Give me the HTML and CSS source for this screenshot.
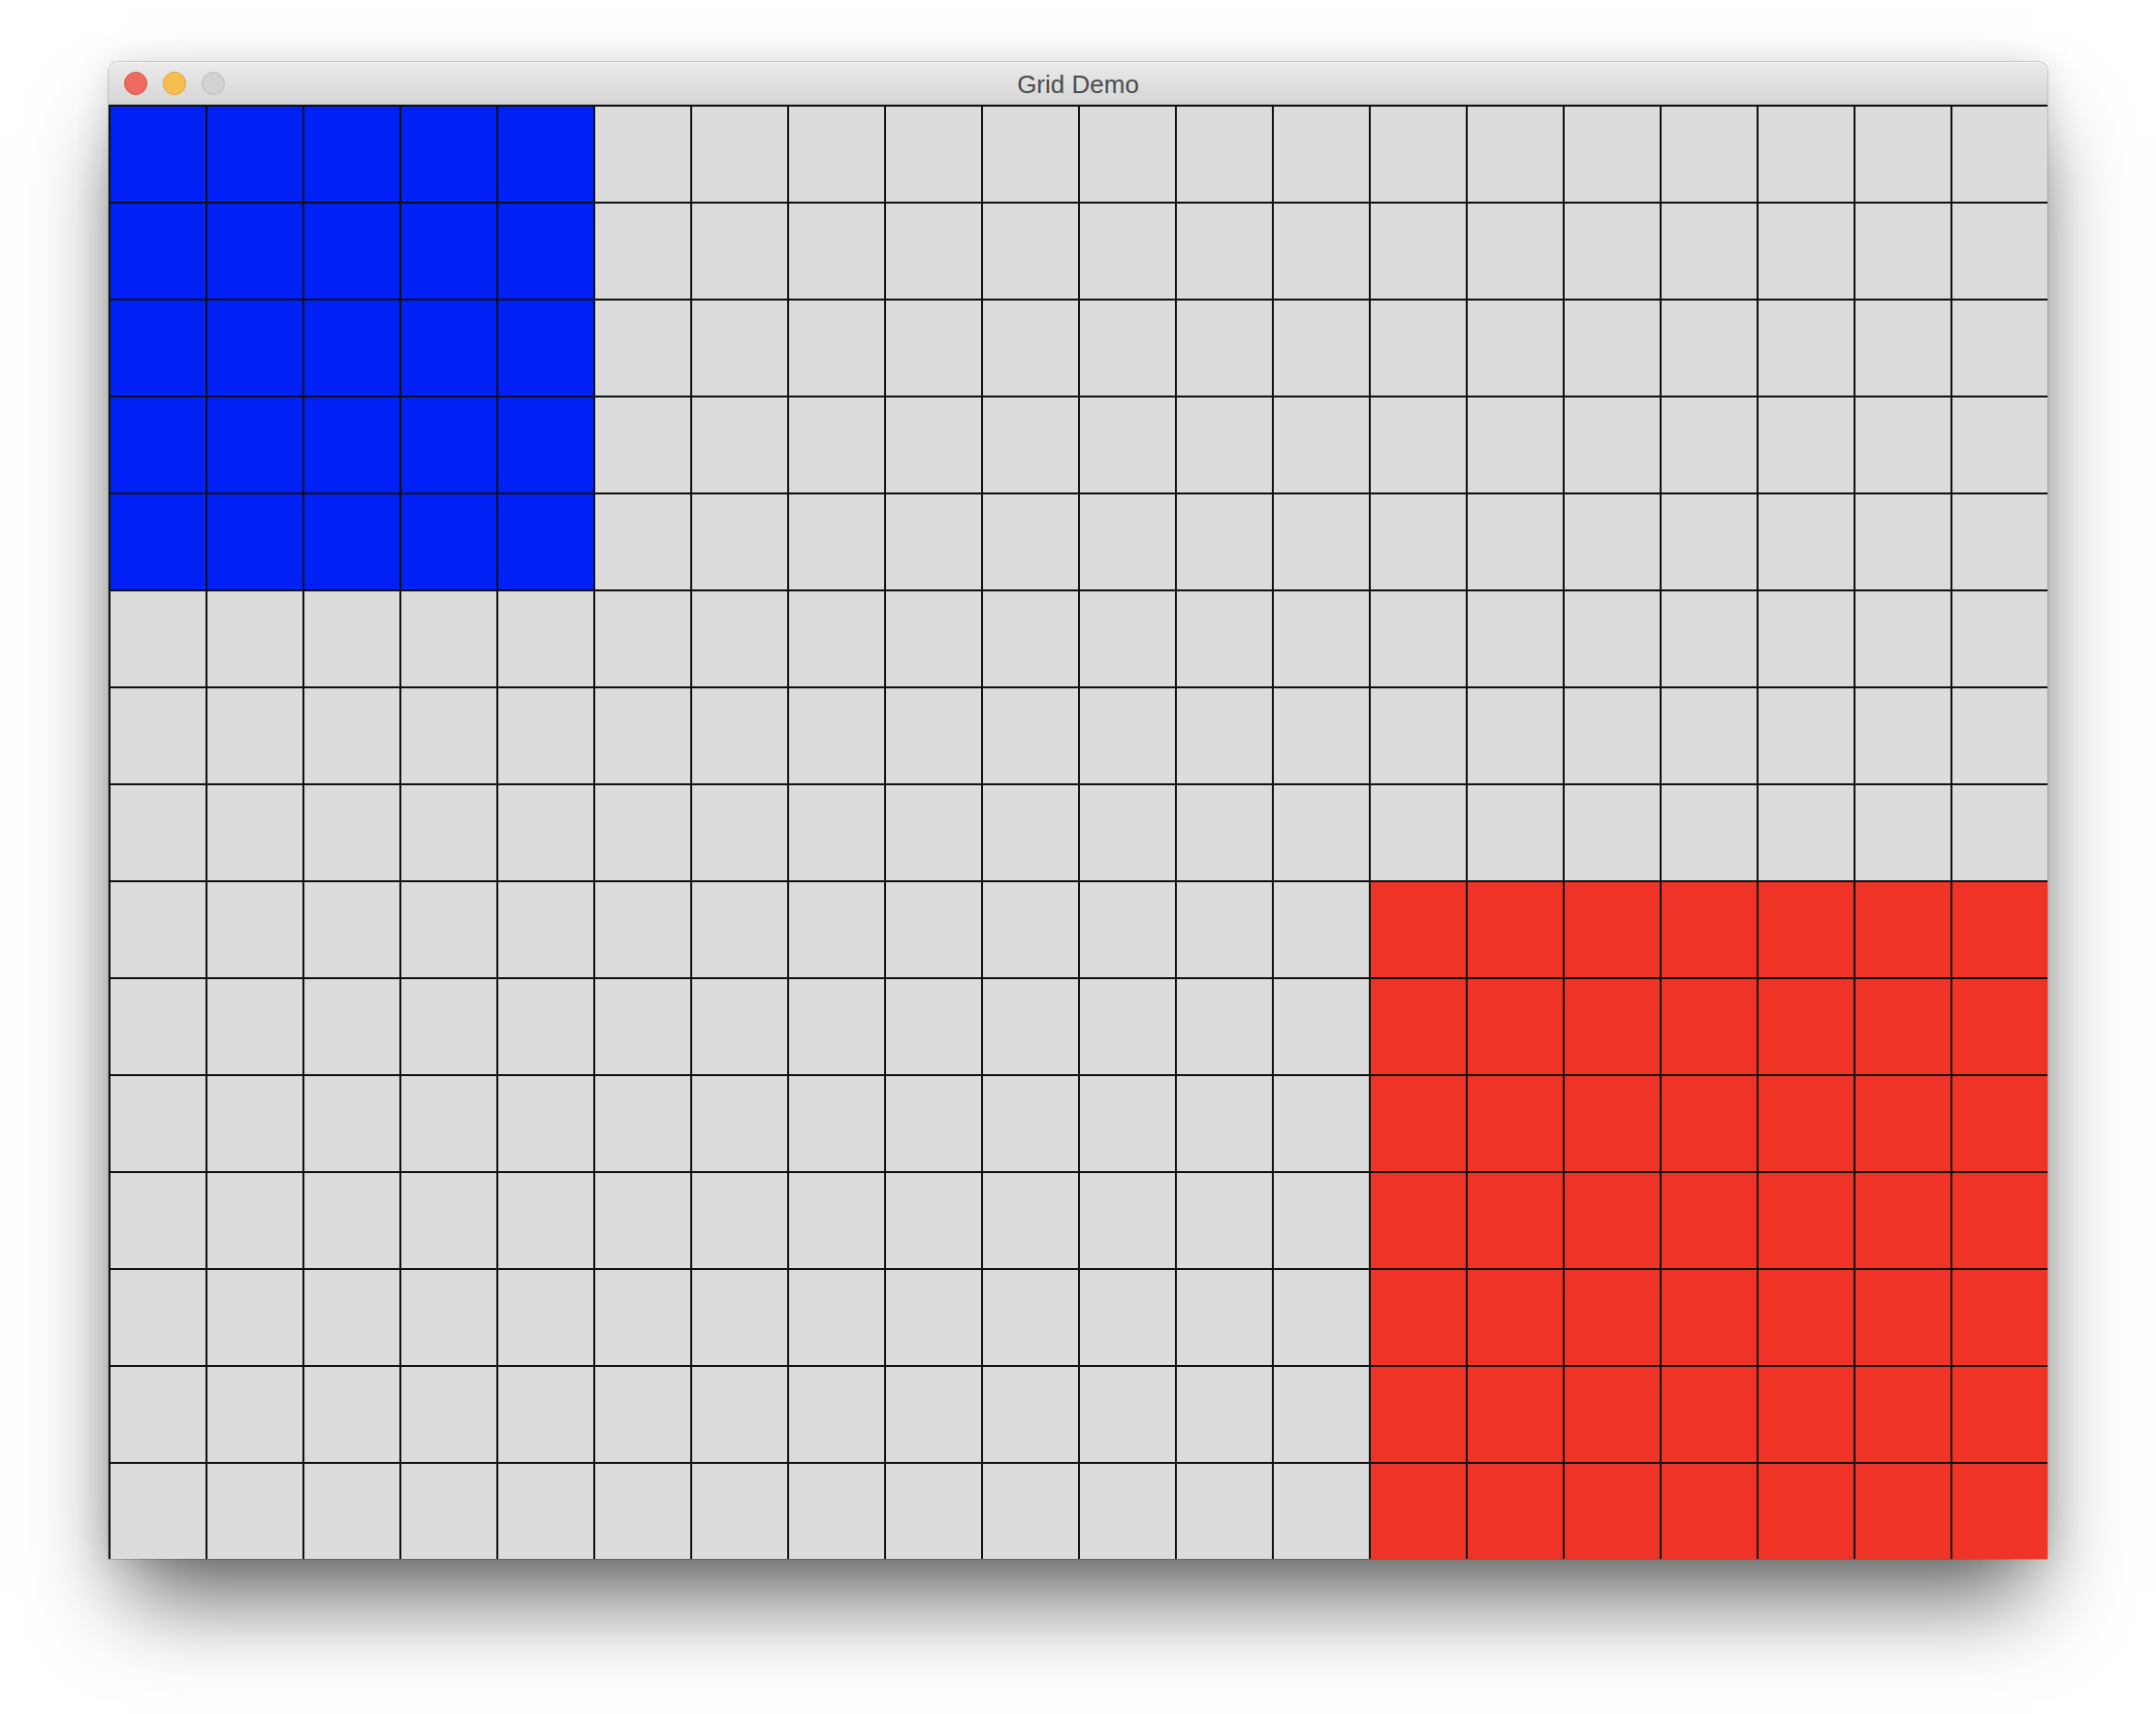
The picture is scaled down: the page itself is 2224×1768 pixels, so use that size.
FILE: index.html
```html
<!DOCTYPE html>
<html>
<head>
<meta charset="utf-8">
<title>Grid Demo</title>
<link rel="stylesheet" href="styles.css">
</head>
<body>
<div class="window">
  <div class="titlebar">
    <div class="lights">
      <span class="light close"></span>
      <span class="light min"></span>
      <span class="light zoom"></span>
    </div>
    <div class="title">Grid Demo</div>
  </div>
  <div class="grid">
    <div class="c b"></div><div class="c b"></div><div class="c b"></div><div class="c b"></div><div class="c b"></div><div class="c"></div><div class="c"></div><div class="c"></div><div class="c"></div><div class="c"></div><div class="c"></div><div class="c"></div><div class="c"></div><div class="c"></div><div class="c"></div><div class="c"></div><div class="c"></div><div class="c"></div><div class="c"></div><div class="c"></div>
    <div class="c b"></div><div class="c b"></div><div class="c b"></div><div class="c b"></div><div class="c b"></div><div class="c"></div><div class="c"></div><div class="c"></div><div class="c"></div><div class="c"></div><div class="c"></div><div class="c"></div><div class="c"></div><div class="c"></div><div class="c"></div><div class="c"></div><div class="c"></div><div class="c"></div><div class="c"></div><div class="c"></div>
    <div class="c b"></div><div class="c b"></div><div class="c b"></div><div class="c b"></div><div class="c b"></div><div class="c"></div><div class="c"></div><div class="c"></div><div class="c"></div><div class="c"></div><div class="c"></div><div class="c"></div><div class="c"></div><div class="c"></div><div class="c"></div><div class="c"></div><div class="c"></div><div class="c"></div><div class="c"></div><div class="c"></div>
    <div class="c b"></div><div class="c b"></div><div class="c b"></div><div class="c b"></div><div class="c b"></div><div class="c"></div><div class="c"></div><div class="c"></div><div class="c"></div><div class="c"></div><div class="c"></div><div class="c"></div><div class="c"></div><div class="c"></div><div class="c"></div><div class="c"></div><div class="c"></div><div class="c"></div><div class="c"></div><div class="c"></div>
    <div class="c b"></div><div class="c b"></div><div class="c b"></div><div class="c b"></div><div class="c b"></div><div class="c"></div><div class="c"></div><div class="c"></div><div class="c"></div><div class="c"></div><div class="c"></div><div class="c"></div><div class="c"></div><div class="c"></div><div class="c"></div><div class="c"></div><div class="c"></div><div class="c"></div><div class="c"></div><div class="c"></div>
    <div class="c"></div><div class="c"></div><div class="c"></div><div class="c"></div><div class="c"></div><div class="c"></div><div class="c"></div><div class="c"></div><div class="c"></div><div class="c"></div><div class="c"></div><div class="c"></div><div class="c"></div><div class="c"></div><div class="c"></div><div class="c"></div><div class="c"></div><div class="c"></div><div class="c"></div><div class="c"></div>
    <div class="c"></div><div class="c"></div><div class="c"></div><div class="c"></div><div class="c"></div><div class="c"></div><div class="c"></div><div class="c"></div><div class="c"></div><div class="c"></div><div class="c"></div><div class="c"></div><div class="c"></div><div class="c"></div><div class="c"></div><div class="c"></div><div class="c"></div><div class="c"></div><div class="c"></div><div class="c"></div>
    <div class="c"></div><div class="c"></div><div class="c"></div><div class="c"></div><div class="c"></div><div class="c"></div><div class="c"></div><div class="c"></div><div class="c"></div><div class="c"></div><div class="c"></div><div class="c"></div><div class="c"></div><div class="c"></div><div class="c"></div><div class="c"></div><div class="c"></div><div class="c"></div><div class="c"></div><div class="c"></div>
    <div class="c"></div><div class="c"></div><div class="c"></div><div class="c"></div><div class="c"></div><div class="c"></div><div class="c"></div><div class="c"></div><div class="c"></div><div class="c"></div><div class="c"></div><div class="c"></div><div class="c"></div><div class="c r"></div><div class="c r"></div><div class="c r"></div><div class="c r"></div><div class="c r"></div><div class="c r"></div><div class="c r"></div>
    <div class="c"></div><div class="c"></div><div class="c"></div><div class="c"></div><div class="c"></div><div class="c"></div><div class="c"></div><div class="c"></div><div class="c"></div><div class="c"></div><div class="c"></div><div class="c"></div><div class="c"></div><div class="c r"></div><div class="c r"></div><div class="c r"></div><div class="c r"></div><div class="c r"></div><div class="c r"></div><div class="c r"></div>
    <div class="c"></div><div class="c"></div><div class="c"></div><div class="c"></div><div class="c"></div><div class="c"></div><div class="c"></div><div class="c"></div><div class="c"></div><div class="c"></div><div class="c"></div><div class="c"></div><div class="c"></div><div class="c r"></div><div class="c r"></div><div class="c r"></div><div class="c r"></div><div class="c r"></div><div class="c r"></div><div class="c r"></div>
    <div class="c"></div><div class="c"></div><div class="c"></div><div class="c"></div><div class="c"></div><div class="c"></div><div class="c"></div><div class="c"></div><div class="c"></div><div class="c"></div><div class="c"></div><div class="c"></div><div class="c"></div><div class="c r"></div><div class="c r"></div><div class="c r"></div><div class="c r"></div><div class="c r"></div><div class="c r"></div><div class="c r"></div>
    <div class="c"></div><div class="c"></div><div class="c"></div><div class="c"></div><div class="c"></div><div class="c"></div><div class="c"></div><div class="c"></div><div class="c"></div><div class="c"></div><div class="c"></div><div class="c"></div><div class="c"></div><div class="c r"></div><div class="c r"></div><div class="c r"></div><div class="c r"></div><div class="c r"></div><div class="c r"></div><div class="c r"></div>
    <div class="c"></div><div class="c"></div><div class="c"></div><div class="c"></div><div class="c"></div><div class="c"></div><div class="c"></div><div class="c"></div><div class="c"></div><div class="c"></div><div class="c"></div><div class="c"></div><div class="c"></div><div class="c r"></div><div class="c r"></div><div class="c r"></div><div class="c r"></div><div class="c r"></div><div class="c r"></div><div class="c r"></div>
    <div class="c"></div><div class="c"></div><div class="c"></div><div class="c"></div><div class="c"></div><div class="c"></div><div class="c"></div><div class="c"></div><div class="c"></div><div class="c"></div><div class="c"></div><div class="c"></div><div class="c"></div><div class="c r"></div><div class="c r"></div><div class="c r"></div><div class="c r"></div><div class="c r"></div><div class="c r"></div><div class="c r"></div>
  </div>
</div>
</body>
</html>
```

FILE: styles.css
```css
html, body {
  margin: 0;
  padding: 0;
  background: #ffffff;
}

body {
  padding: 64px 0 0 112px;
  height: 1768px;
  box-sizing: border-box;
  overflow: hidden;
}

.window {
  width: 2000px;
  border-radius: 10px 10px 0 0;
  background: #dcdcdc;
  box-shadow:
    0 0 0 1px rgba(0, 0, 0, 0.16),
    0 56px 90px -18px rgba(0, 0, 0, 0.62),
    0 0 36px rgba(0, 0, 0, 0.12);
}

.titlebar {
  position: relative;
  height: 44px;
  box-sizing: border-box;
  border-radius: 10px 10px 0 0;
  background: linear-gradient(#ebebeb, #d5d5d5);
  box-shadow: inset 0 1px 0 #f6f6f6;
  border-bottom: 1px solid #c2c2c2;
  display: flex;
  align-items: center;
  justify-content: center;
}

.lights {
  position: absolute;
  left: 16px;
  top: 10px;
  display: flex;
  gap: 16px;
}

.light {
  display: block;
  width: 24px;
  height: 24px;
  box-sizing: border-box;
  border-radius: 50%;
}

.close {
  background: #ee6a5e;
  border: 1px solid #d9544a;
}

.min {
  background: #f6be50;
  border: 1px solid #dba53f;
}

.zoom {
  background: #d2d2d2;
  border: 1px solid #bdbdbd;
}

.title {
  font-family: "Liberation Sans", Arial, sans-serif;
  font-size: 26px;
  color: #4b4b4b;
  line-height: 44px;
  padding-top: 3px;
}

.grid {
  display: grid;
  grid-template-columns: repeat(20, 100px);
  grid-template-rows: repeat(15, 100px);
}

.c {
  box-sizing: border-box;
  background: #dcdcdc;
  border-top: 2px solid #111111;
  border-left: 2px solid #111111;
}

.b {
  background: #0021f5;
}

.r {
  background: #ef3326;
}
```
